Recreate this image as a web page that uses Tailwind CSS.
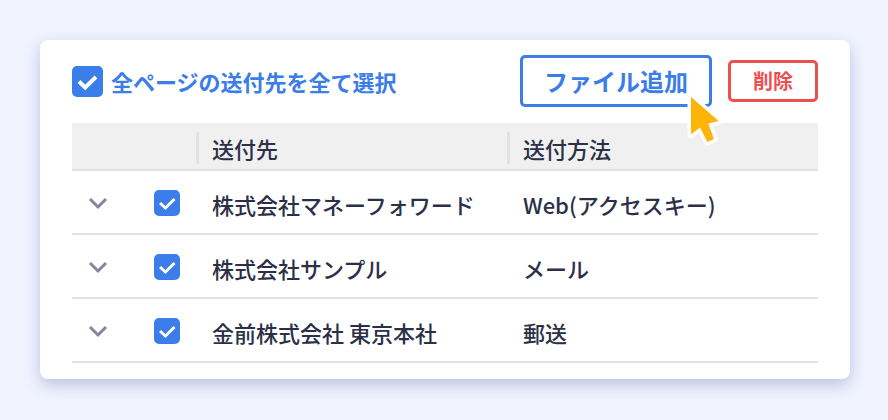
<!DOCTYPE html>
<html lang="ja">
<head>
    <meta charset="UTF-8">
    <meta name="viewport" content="width=device-width, initial-scale=1.0">
    <title>送付先一覧</title>
    <script src="https://cdn.jsdelivr.net/npm/@tailwindcss/browser@4"></script>
</head>
<body class="bg-[#f1f3ff] py-10 pr-[38px] pl-10 font-['Noto_Sans_CJK_JP',sans-serif] font-medium text-[#2b3048]">
    <main class="rounded-lg bg-white px-8 pt-[15px] pb-4 shadow-[0_6px_16px_rgba(110,125,180,0.4)]">
        <!-- Toolbar -->
        <div class="flex items-center justify-between pb-4">
            <label class="flex items-center gap-2 text-[22px] leading-8 font-bold text-[#3b7de9]">
                <span class="grid size-[31px] shrink-0 *:col-start-1 *:row-start-1">
                    <input type="checkbox" checked class="peer size-full appearance-none rounded-[5px] border-2 border-[#3b7de9] checked:bg-[#3b7de9]">
                    <svg viewBox="0 0 31 31" class="pointer-events-none invisible size-full peer-checked:visible" fill="none" stroke="#fff" stroke-width="4">
                        <path d="M7 15.500l6.200 6L24 11"/>
                    </svg>
                </span>
                全ページの送付先を全て選択
            </label>
            <div class="flex items-center gap-4">
                <div class="relative">
                    <button type="button" class="block h-[52px] w-48 rounded-[5px] border-3 border-[#3b7de9] bg-white text-2xl font-bold text-[#3b7de9]">ファイル追加</button>
                    <!-- Mouse pointer -->
                    <svg viewBox="0 0 36 54" class="pointer-events-none absolute top-[37px] left-[166px] h-[54px] w-9" fill="#ffb409" stroke="#fff" stroke-width="7" stroke-linejoin="round" paint-order="stroke">
                        <path d="M5 5L32.700 29L22.300 31.500L28 47L21.300 50L14 35.500L5 42.500z"/>
                    </svg>
                </div>
                <button type="button" class="h-[42px] w-[90px] rounded-[5px] border-3 border-[#ed4f4f] bg-white text-xl font-bold text-[#ed4f4f]">削除</button>
            </div>
        </div>

        <!-- Destinations -->
        <table class="w-full table-fixed text-left text-[22px] leading-8">
            <thead>
                <tr class="h-[47px] border-b-2 border-[#e2e2e2] bg-[#f0f0f0]">
                    <td class="w-[52px]"></td>
                    <td class="w-[72px]"></td>
                    <th scope="col" class="w-[311px] pt-1 font-medium"><div class="border-l-3 border-[#e2e2e2] pl-[13px]">送付先</div></th>
                    <th scope="col" class="pt-1 font-medium"><div class="border-l-3 border-[#e2e2e2] pl-[13px]">送付方法</div></th>
                </tr>
            </thead>
            <tbody>
                <tr class="h-16 border-b-2 border-[#e2e2e2]">
                    <td class="pt-0.5">
                        <button type="button" aria-label="開く" class="mx-auto block size-5">
                            <svg viewBox="0 0 20 20" class="size-5" fill="none" stroke="#83879b" stroke-width="3"><path d="M2 6l8 8l8-8"/></svg>
                        </button>
                    </td>
                    <td class="pt-0.5">
                        <span class="ml-[30px] grid size-[26px] *:col-start-1 *:row-start-1">
                            <input type="checkbox" checked aria-label="株式会社マネーフォワード" class="peer size-full appearance-none rounded-[5px] border-2 border-[#3b7de9] checked:bg-[#3b7de9]">
                            <svg viewBox="0 0 26 26" class="pointer-events-none invisible size-full peer-checked:visible" fill="none" stroke="#fff" stroke-width="3"><path d="M6 13l5.400 5L20.500 9"/></svg>
                        </span>
                    </td>
                    <td class="pt-1 pl-4">株式会社マネーフォワード</td>
                    <td class="pt-1 pl-4">Web(アクセスキー)</td>
                </tr>
                <tr class="h-16 border-b-2 border-[#e2e2e2]">
                    <td class="pt-0.5">
                        <button type="button" aria-label="開く" class="mx-auto block size-5">
                            <svg viewBox="0 0 20 20" class="size-5" fill="none" stroke="#83879b" stroke-width="3"><path d="M2 6l8 8l8-8"/></svg>
                        </button>
                    </td>
                    <td class="pt-0.5">
                        <span class="ml-[30px] grid size-[26px] *:col-start-1 *:row-start-1">
                            <input type="checkbox" checked aria-label="株式会社サンプル" class="peer size-full appearance-none rounded-[5px] border-2 border-[#3b7de9] checked:bg-[#3b7de9]">
                            <svg viewBox="0 0 26 26" class="pointer-events-none invisible size-full peer-checked:visible" fill="none" stroke="#fff" stroke-width="3"><path d="M6 13l5.400 5L20.500 9"/></svg>
                        </span>
                    </td>
                    <td class="pt-1 pl-4">株式会社サンプル</td>
                    <td class="pt-1 pl-4">メール</td>
                </tr>
                <tr class="h-16 border-b-2 border-[#e2e2e2]">
                    <td class="pt-0.5">
                        <button type="button" aria-label="開く" class="mx-auto block size-5">
                            <svg viewBox="0 0 20 20" class="size-5" fill="none" stroke="#83879b" stroke-width="3"><path d="M2 6l8 8l8-8"/></svg>
                        </button>
                    </td>
                    <td class="pt-0.5">
                        <span class="ml-[30px] grid size-[26px] *:col-start-1 *:row-start-1">
                            <input type="checkbox" checked aria-label="金前株式会社 東京本社" class="peer size-full appearance-none rounded-[5px] border-2 border-[#3b7de9] checked:bg-[#3b7de9]">
                            <svg viewBox="0 0 26 26" class="pointer-events-none invisible size-full peer-checked:visible" fill="none" stroke="#fff" stroke-width="3"><path d="M6 13l5.400 5L20.500 9"/></svg>
                        </span>
                    </td>
                    <td class="pt-1 pl-4">金前株式会社 東京本社</td>
                    <td class="pt-1 pl-4">郵送</td>
                </tr>
            </tbody>
        </table>
    </main>
</body>
</html>
